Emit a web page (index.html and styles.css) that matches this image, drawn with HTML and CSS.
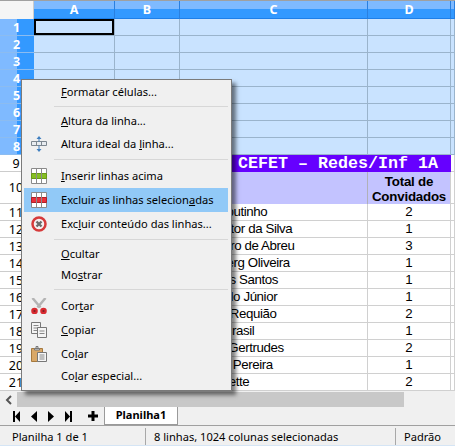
FILE: index.html
```html
<!DOCTYPE html>
<html lang="en">

<head>
    <meta charset="UTF-8">
    <title>Planilha1</title>
    <link rel="stylesheet" href="styles.css">
</head>

<body>
    <div class="app">
        <main class="sheet">
            <div class="corner"></div>
            <div class="col-head">A</div>
            <div class="col-head">B</div>
            <div class="col-head">C</div>
            <div class="col-head">D</div>
            <div class="col-head"></div>

            <div class="row-head sel">1</div>
            <div class="cell sel cursor"></div><div class="cell sel"></div><div class="cell sel"></div><div class="cell sel"></div><div class="cell sel"></div>
            <div class="row-head sel">2</div>
            <div class="cell sel"></div><div class="cell sel"></div><div class="cell sel"></div><div class="cell sel"></div><div class="cell sel"></div>
            <div class="row-head sel">3</div>
            <div class="cell sel"></div><div class="cell sel"></div><div class="cell sel"></div><div class="cell sel"></div><div class="cell sel"></div>
            <div class="row-head sel">4</div>
            <div class="cell sel"></div><div class="cell sel"></div><div class="cell sel"></div><div class="cell sel"></div><div class="cell sel"></div>
            <div class="row-head sel">5</div>
            <div class="cell sel"></div><div class="cell sel"></div><div class="cell sel"></div><div class="cell sel"></div><div class="cell sel"></div>
            <div class="row-head sel">6</div>
            <div class="cell sel"></div><div class="cell sel"></div><div class="cell sel"></div><div class="cell sel"></div><div class="cell sel"></div>
            <div class="row-head sel">7</div>
            <div class="cell sel"></div><div class="cell sel"></div><div class="cell sel"></div><div class="cell sel"></div><div class="cell sel"></div>
            <div class="row-head sel">8</div>
            <div class="cell sel"></div><div class="cell sel"></div><div class="cell sel"></div><div class="cell sel"></div><div class="cell sel"></div>

            <div class="row-head">9</div>
            <div class="banner">CEFET – Redes/Inf 1A</div>
            <div class="cell"></div>

            <div class="row-head">10</div>
            <div class="cell title"></div>
            <div class="cell title"></div>
            <div class="cell title"></div>
            <div class="cell title total">Total de Convidados</div>
            <div class="cell"></div>

            <div class="row-head">11</div>
            <div class="cell"></div><div class="cell"></div>
            <div class="cell name">Paulo Coutinho</div><div class="cell num">2</div><div class="cell"></div>
            <div class="row-head">12</div>
            <div class="cell"></div><div class="cell"></div>
            <div class="cell name">José Heitor da Silva</div><div class="cell num">1</div><div class="cell"></div>
            <div class="row-head">13</div>
            <div class="cell"></div><div class="cell"></div>
            <div class="cell name">Ana Pedro de Abreu</div><div class="cell num">3</div><div class="cell"></div>
            <div class="row-head">14</div>
            <div class="cell"></div><div class="cell"></div>
            <div class="cell name">Lindenberg Oliveira</div><div class="cell num">1</div><div class="cell"></div>
            <div class="row-head">15</div>
            <div class="cell"></div><div class="cell"></div>
            <div class="cell name">Hugo dos Santos</div><div class="cell num">1</div><div class="cell"></div>
            <div class="row-head">16</div>
            <div class="cell"></div><div class="cell"></div>
            <div class="cell name">Ciro Paulo Júnior</div><div class="cell num">1</div><div class="cell"></div>
            <div class="row-head">17</div>
            <div class="cell"></div><div class="cell"></div>
            <div class="cell name">Roberto Requião</div><div class="cell num">2</div><div class="cell"></div>
            <div class="row-head">18</div>
            <div class="cell"></div><div class="cell"></div>
            <div class="cell name">Marina Brasil</div><div class="cell num">1</div><div class="cell"></div>
            <div class="row-head">19</div>
            <div class="cell"></div><div class="cell"></div>
            <div class="cell name">Adriana Gertrudes</div><div class="cell num">2</div><div class="cell"></div>
            <div class="row-head">20</div>
            <div class="cell"></div><div class="cell"></div>
            <div class="cell name">Eduardo Pereira</div><div class="cell num">1</div><div class="cell"></div>
            <div class="row-head">21</div>
            <div class="cell"></div><div class="cell"></div>
            <div class="cell name">Mirian Ivette</div><div class="cell num">2</div><div class="cell"></div>
        </main>

        <div class="hscroll">
            <div class="hscroll-btn">
                <svg width="8" height="10" viewBox="0 0 8 10"><path d="M6 1 2 5l4 4" fill="none" stroke="#555" stroke-width="2"/></svg>
            </div>
            <div class="hscroll-track"></div>
        </div>

        <div class="tabbar">
            <div class="tab-nav">
                <svg width="7" height="11" viewBox="0 0 7 11"><path d="M0 0h2v11H0zM7 0v11L2 5.500z"/></svg>
                <svg width="6" height="11" viewBox="0 0 6 11"><path d="M6 0v11L0 5.500z"/></svg>
                <svg width="6" height="11" viewBox="0 0 6 11"><path d="M0 0v11l6-5.500z"/></svg>
                <svg width="7" height="11" viewBox="0 0 7 11"><path d="M5 0h2v11H5zM0 0v11l5-5.500z"/></svg>
                <svg class="tab-add" width="10" height="10" viewBox="0 0 10 10"><path d="M3.500 0h3v3.500H10v3H6.500V10h-3V6.500H0v-3h3.500z"/></svg>
            </div>
            <div class="tab">Planilha1</div>
        </div>

        <footer class="status">
            <div class="status-sheet">Planilha 1 de 1</div>
            <div class="status-sel">8 linhas, 1024 colunas selecionadas</div>
            <div class="status-style">Padrão</div>
        </footer>
    </div>

    <nav class="menu">
        <div class="item"><span class="icon"></span><span class="label"><u>F</u>ormatar células...</span></div>
        <div class="sep"></div>
        <div class="item"><span class="icon"></span><span class="label"><u>A</u>ltura da linha...</span></div>
        <div class="item tall">
            <span class="icon">
                <svg width="16" height="16" viewBox="0 0 16 16">
                    <path d="M.5 5.500h15v4H.5zM5.500 5.500v4M10.500 5.500v4" fill="#e8ecf0" stroke="#7d8790"/>
                    <path d="M8 0 5.500 3H7.500V5.500H8.500V3H10.500zM8 16 5.500 13H7.500V9.500H8.500V13H10.500z" fill="#3f7fc0"/>
                </svg>
            </span>
            <span class="label">Altura ideal da <u>l</u>inha...</span>
        </div>
        <div class="sep"></div>
        <div class="item tall">
            <span class="icon">
                <svg width="16" height="16" viewBox="0 0 16 16">
                    <path d="M.5.500h15v15H.5z" fill="#fff" stroke="#8a8a8a"/>
                    <path d="M.5 5.500h15v5H.5z" fill="#86bf22" stroke="#6a9a18"/>
                    <path d="M5.500.500v15M10.500.500v15" stroke="#8a8a8a"/>
                </svg>
            </span>
            <span class="label"><u>I</u>nserir linhas acima</span>
        </div>
        <div class="item tall active">
            <span class="icon">
                <svg width="16" height="16" viewBox="0 0 16 16">
                    <path d="M.5.500h15v15H.5z" fill="#fff" stroke="#8a8a8a"/>
                    <path d="M.5 5.500h15v5H.5z" fill="#e8303a" stroke="#b02028"/>
                    <path d="M5.500.500v15M10.500.500v15" stroke="#8a8a8a"/>
                </svg>
            </span>
            <span class="label">Excluir as linhas selecion<u>a</u>das</span>
        </div>
        <div class="item tall">
            <span class="icon">
                <svg width="16" height="16" viewBox="0 0 16 16">
                    <circle cx="8" cy="8" r="6.500" fill="#f4f0f0" stroke="#d63a3a" stroke-width="2.500"/>
                    <path d="M5.500 5.500l5 5M10.500 5.500l-5 5" stroke="#6a6a6a" stroke-width="2.400"/>
                </svg>
            </span>
            <span class="label">Exc<u>l</u>uir conteúdo das linhas...</span>
        </div>
        <div class="sep"></div>
        <div class="item"><span class="icon"></span><span class="label"><u>O</u>cultar</span></div>
        <div class="item"><span class="icon"></span><span class="label">Mo<u>s</u>trar</span></div>
        <div class="sep"></div>
        <div class="item tall">
            <span class="icon">
                <svg width="16" height="16" viewBox="0 0 16 16">
                    <path d="M1.500 0 9.500 9.500M14.500 0 6.500 9.500" stroke="#b4b4b4" stroke-width="2.500"/>
                    <circle cx="3.500" cy="13" r="2.200" fill="#7a2024" stroke="#d92a30" stroke-width="2.200"/>
                    <circle cx="12.500" cy="13" r="2.200" fill="#7a2024" stroke="#d92a30" stroke-width="2.200"/>
                </svg>
            </span>
            <span class="label">Cor<u>t</u>ar</span>
        </div>
        <div class="item tall">
            <span class="icon">
                <svg width="16" height="16" viewBox="0 0 16 16">
                    <path d="M.5.500h9v11h-9z" fill="#f4f4f4" stroke="#777"/>
                    <path d="M2.500 3.500h5M2.500 6h5M2.500 8.500h5" stroke="#888"/>
                    <path d="M6.500 5.500h9v10h-9z" fill="#f4f4f4" stroke="#777"/>
                    <path d="M8.500 9h5M8.500 11.500h5" stroke="#888"/>
                </svg>
            </span>
            <span class="label"><u>C</u>opiar</span>
        </div>
        <div class="item tall">
            <span class="icon">
                <svg width="16" height="16" viewBox="0 0 16 16">
                    <path d="M.5 2.500h11v13H.5z" fill="#d9a868" stroke="#a5793f"/>
                    <path d="M3.500 2.500h5V4h-5zM5 .5h2v2H5z" fill="#ddd" stroke="#777"/>
                    <path d="M6.500 6.500h9v9h-9z" fill="#f6f6f6" stroke="#777"/>
                    <path d="M8.500 9h5M8.500 11h5M8.500 13h5" stroke="#888"/>
                </svg>
            </span>
            <span class="label">Co<u>l</u>ar</span>
        </div>
        <div class="item"><span class="icon"></span><span class="label">Co<u>l</u>ar especial...</span></div>
    </nav>
</body>

</html>
```

FILE: styles.css
```css
html,
body {
    margin: 0;
    height: 446px;
    overflow: hidden;
}

body {
    position: relative;
    background-color: #f0f0f0;
    font-family: 'Noto Sans', 'Open Sans', sans-serif;
    font-size: 11.1px;
    color: #000;
}

.app {
    display: flex;
    flex-direction: column;
    height: 446px;
    border-top: 1px solid #a0a0a0;
    box-sizing: border-box;
}

/* sheet grid */
.sheet {
    display: grid;
    grid-template-columns: 34px 81px 65px 188px 83px 4px;
    grid-template-rows: 18px repeat(9, 17px) 32px repeat(11, 17px);
    background-color: #fff;
    height: 390px;
    flex: none;
}

.corner {
    background-color: #f5f5f5;
    border-right: 1px solid #ccc;
}

.col-head {
    display: flex;
    align-items: center;
    justify-content: center;
    box-sizing: border-box;
    background: linear-gradient(to bottom, #7fbaff 50%, #3399ff 50%);
    border-right: 1px solid #2a80e0;
    border-bottom: 1px solid #1f7fe8;
    color: #fff;
    font-size: 12.5px;
    font-weight: bold;
}

.row-head {
    display: flex;
    align-items: center;
    justify-content: center;
    box-sizing: border-box;
    background-color: #fff;
    border-right: 1px solid #aaa;
    border-bottom: 1px solid #ccc;
    padding-right: 1px;
    font-size: 12.5px;
}

.row-head.sel {
    background: linear-gradient(to right, #7fbaff 50%, #3399ff 50%);
    border-right: 0;
    border-bottom: 1px solid #8cbcf0;
    color: #fff;
    font-weight: bold;
}

.cell {
    box-sizing: border-box;
    border-right: 1px solid #d0d0d0;
    border-bottom: 1px solid #d0d0d0;
    font-family: 'Liberation Sans', Arial, sans-serif;
    font-size: 13.3px;
    letter-spacing: -0.4px;
    line-height: 16px;
    white-space: nowrap;
    overflow: hidden;
}

.cell.sel {
    background-color: #c9e3ff;
    border-color: #9ab4cc;
}

.cell.cursor {
    box-shadow: inset 0 0 0 2px #000;
}

.banner {
    grid-column: 2 / 6;
    box-sizing: border-box;
    padding-right: 13px;
    background-color: #6600ff;
    color: #fff;
    font-family: 'Liberation Mono', monospace;
    font-weight: bold;
    font-size: 16.67px;
    line-height: 17px;
    text-align: right;
    white-space: nowrap;
    overflow: hidden;
}

.title {
    background-color: #c3c3ff;
    border-bottom: 0;
    border-right-color: #b0b0b8;
}

.total {
    font-size: 13.3px;
    font-weight: bold;
    letter-spacing: -0.2px;
    text-align: center;
    white-space: normal;
    line-height: 15px;
    padding-top: 2px;
    border-right-color: #d0d0d0;
}

.name {
    padding-left: 2px;
}

.num {
    text-align: center;
    letter-spacing: 0;
}

/* scrollbar, tabs, status */
.hscroll {
    display: flex;
    height: 15px;
    padding-top: 1px;
    flex: none;
}

.hscroll-btn {
    display: flex;
    align-items: center;
    justify-content: center;
    width: 17px;
}

.hscroll-track {
    width: 387px;
    background-color: #c8c8c8;
}

.tabbar {
    display: flex;
    align-items: stretch;
    height: 18px;
    flex: none;
}

.tab-nav {
    display: flex;
    align-items: center;
    gap: 11px;
    width: 104px;
    padding-left: 13px;
    box-sizing: border-box;
}

.tab-add {
    margin-left: 5px;
}

.tab {
    width: 74px;
    box-sizing: border-box;
    background-color: #fff;
    border: 1px solid #9a9a9a;
    border-top: 0;
    text-align: center;
    font-size: 11px;
    font-weight: bold;
    line-height: 16px;
}

.status {
    display: flex;
    flex: 1;
    align-items: stretch;
    border-top: 1px solid #a0a0a0;
    border-bottom: 1px solid #d5e5f5;
}

.status > div {
    box-sizing: border-box;
    margin-top: 2px;
    line-height: 17px;
    white-space: nowrap;
}

.status-sheet {
    width: 146px;
    padding-left: 12px;
    border-right: 1px solid #a8a8a8;
}

.status-sel {
    width: 250px;
    padding-left: 8px;
    border-right: 1px solid #a8a8a8;
}

.status-style {
    padding-left: 8px;
}

/* context menu */
.menu {
    position: absolute;
    left: 21px;
    top: 79px;
    width: 211px;
    height: 312px;
    box-sizing: border-box;
    padding: 2px 3px 2px 2px;
    background-color: #f0f0f0;
    border: 1px solid #7a7a7a;
    box-shadow: 4px 4px 4px rgba(0, 0, 0, 0.5);
}

.item {
    display: flex;
    align-items: center;
    height: 21px;
    white-space: nowrap;
}

.item.tall {
    height: 24px;
}

.item.active {
    background-color: #91c9f7;
}

.icon {
    display: flex;
    width: 16px;
    height: 16px;
    margin: 0 14px 0 7px;
    flex: none;
}

.label {
    margin-bottom: 2px;
}

.sep {
    box-sizing: border-box;
    height: 5px;
    margin-top: 3px;
    margin-left: 30px;
    border-top: 1px solid #d7d7d7;
}
```
